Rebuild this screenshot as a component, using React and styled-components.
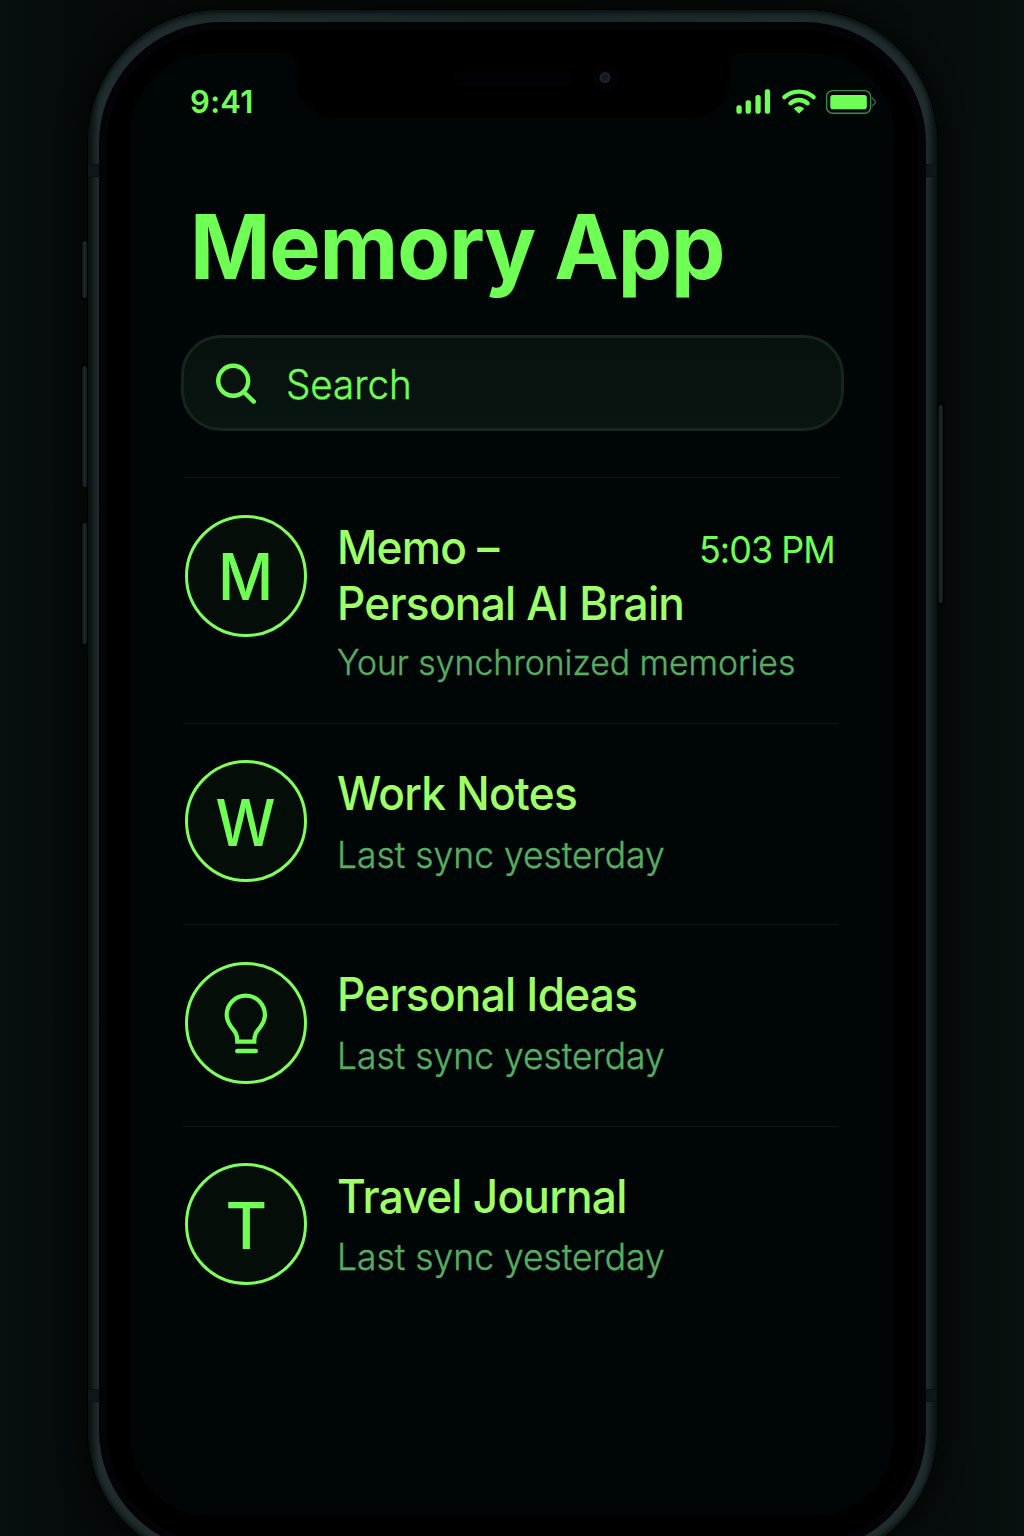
import React from "react";
import styled, { createGlobalStyle } from "styled-components";

const GlobalStyle = createGlobalStyle`
  * { box-sizing: border-box; }
  html, body { margin: 0; padding: 0; background: #060d0c; }
  body { width: 1024px; height: 1536px; overflow: hidden; font-family: Inter, "Liberation Sans", sans-serif; }
`;

const green = "#70ff55";

const Stage = styled.main`
  position: relative;
  width: 1024px;
  height: 1536px;
  overflow: hidden;
  padding: 10px 0 0 88px;
  background: linear-gradient(90deg, #07100e 0%, #050b0a 7%, #040908 50%, #060d0c 94%, #08110f 100%);
`;

const SideButton = styled.div`
  position: absolute;
  left: ${(p) => p.$x}px;
  top: ${(p) => p.$y}px;
  width: 5px;
  height: ${(p) => p.$h}px;
  border-radius: 3px;
  background: linear-gradient(90deg, #11181b, #2f3a3f 55%, #1a2226);
  box-shadow: 0 0 2px 1px #010303;
`;

const Frame = styled.div`
  position: relative;
  width: 849px;
  height: 1553px;
  padding: 12px 11px 11px;
  border-radius: 132px;
  background: linear-gradient(90deg, #0c1414 0, #1c2728 9px, #202c2d 11px, #1c2728 50%, #202c2d 838px, #1a2425 842px, #0d1515 849px);
  box-shadow: 0 0 0 1px #000202, 0 0 24px 4px rgba(0, 3, 3, 0.6), inset 0 3px 5px #0a1112, inset 0 -3px 5px #0a1112;
`;

const Antenna = styled.div`
  position: absolute;
  top: ${(p) => p.$y}px;
  ${(p) => (p.$right ? "right: 0;" : "left: 0;")}
  width: 11px;
  height: 13px;
  background: #0e1718;
  border-top: 1px solid #0a1112;
  border-bottom: 1px solid #0a1112;
`;

const Bezel = styled.div`
  height: 1530px;
  padding: 23px 24px 28px 23px;
  border-radius: 122px;
  background: #000;
  border: 8px solid #040307;
`;

const Screen = styled.div`
  position: relative;
  height: 1463px;
  border-radius: 80px;
  background: #000505;
  overflow: hidden;
`;

const Notch = styled.svg`
  position: absolute;
  left: 155px;
  top: 0;
`;

const StatusBar = styled.header`
  display: flex;
  justify-content: space-between;
  align-items: center;
  height: 98px;
  padding: 0 17px 0 60px;
`;

const Clock = styled.time`
  font-size: 31px;
  font-weight: 600;
  line-height: 38px;
  letter-spacing: 0.3px;
  color: ${green};
`;

const StatusIcons = styled.div`
  display: flex;
  align-items: center;
  height: 30px;

  svg:nth-child(2) { margin: 0 8px 0 10px; }
`;

const Content = styled.section`
  padding: 0 50px 0 51px;
  display: flex;
  flex-direction: column;
`;

const Title = styled.h1`
  margin: 41px 0 0 9px;
  font-size: 90px;
  line-height: 110px;
  font-weight: 670;
  letter-spacing: -1.2px;
  white-space: nowrap;
  color: ${green};
  transform: scaleX(0.959);
  transform-origin: left;
`;

const SearchBox = styled.label`
  display: flex;
  align-items: center;
  gap: 29px;
  margin-top: 33px;
  height: 96px;
  padding: 0 0 0 31px;
  border-radius: 40px;
  border: 3px solid #15261f;
  background: linear-gradient(180deg, #07110e, #091511);
  color: ${green};
`;

const Placeholder = styled.span`
  padding-top: 3px;
  font-size: 40.5px;
  font-weight: 330;
  -webkit-text-stroke: 0.4px ${green};
  transform: scaleX(0.952);
  transform-origin: left;
`;

const List = styled.ul`
  list-style: none;
  margin: 46px 0 0;
  padding: 0 5px 0 2px;
`;

const Item = styled.li`
  display: grid;
  grid-template-columns: 122px 1fr;
  column-gap: 30px;
  align-items: start;
  height: ${(p) => p.$h}px;
  padding: ${(p) => p.$pt}px 4px 0 2px;
  border-top: 1px solid #0c1615;
`;

const Avatar = styled.div`
  display: flex;
  align-items: center;
  justify-content: center;
  width: 122px;
  height: 122px;
  border-radius: 50%;
  border: 3px solid #80ff5c;
  background: #050d08;
  color: ${green};
  font-size: 65px;
  font-weight: 550;
  line-height: 1;
`;

const Glyph = styled.span`
  padding-top: ${(p) => p.$drop}px;
  transform: scaleX(${(p) => p.$sx});
`;

const Copy = styled.div`
  padding-top: ${(p) => p.$pt}px;
  white-space: nowrap;
  min-width: 0;
`;

const Heading = styled.div`
  display: flex;
  justify-content: space-between;
  align-items: flex-start;
`;

const Name = styled.h2`
  margin: 0;
  width: 350px;
  font-size: 46px;
  line-height: 56px;
  font-weight: 550;
  letter-spacing: -0.8px;
  color: #9fff66;
  transform: scaleX(0.961);
  transform-origin: left;
`;

const NameLine = styled.span`
  display: block;
`;

const Sub = styled.p`
  margin: ${(p) => p.$mt}px 0 0;
  font-size: ${(p) => p.$fs}px;
  line-height: 44px;
  font-weight: 330;
  color: #58ad61;
  -webkit-text-stroke: 0.4px #58ad61;
  transform: scaleX(${(p) => p.$sx});
  transform-origin: left;
`;

const Time = styled.time`
  padding-top: 8px;
  font-size: 37px;
  line-height: 46px;
  font-weight: 400;
  letter-spacing: -1px;
  color: ${green};
  transform: scaleX(0.972);
  transform-origin: right;
`;

const SignalIcon = () => (
  <svg width="36" height="28" viewBox="0 0 36 28" fill={green}>
    <rect x="1.4" y="17.3" width="5.3" height="8.5" rx="2.2" />
    <rect x="10.6" y="12.2" width="5.3" height="13.6" rx="2.2" />
    <rect x="20.4" y="7" width="5.3" height="18.8" rx="2.2" />
    <rect x="29.8" y="1.3" width="5.3" height="24.5" rx="2.2" />
  </svg>
);

const WifiIcon = () => (
  <svg width="36" height="26" viewBox="0 0 36 26" fill="none" stroke={green} strokeLinecap="round">
    <path d="M3.4 8.2 C11.5 0.8 24.5 0.8 32.6 8.2" strokeWidth="4.3" />
    <path d="M9.4 14.3 C14.2 9.9 21.8 9.9 26.6 14.3" strokeWidth="4.3" />
    <path d="M18 23.4 L14 19.6 C16.2 17.7 19.8 17.7 22 19.6 Z" fill={green} strokeWidth="1.8" strokeLinejoin="round" />
  </svg>
);

const BatteryIcon = () => (
  <svg width="52" height="26" viewBox="0 0 52 26" fill="none">
    <rect x="1.6" y="1.6" width="44" height="22.6" rx="6" stroke="#3a8a4c" strokeWidth="1.4" />
    <rect x="5.3" y="6" width="36.5" height="14.2" rx="2.5" fill={green} />
    <path d="M47 8.8 L50.2 12 Q50.8 13 50.2 14 L47 17.2" stroke="#2f6b3d" strokeWidth="1.3" />
  </svg>
);

const SearchIcon = () => (
  <svg width="42" height="43" viewBox="0 0 42 43" fill="none" stroke={green} strokeWidth="4.4" strokeLinecap="round">
    <circle cx="18.2" cy="18.8" r="15" />
    <path d="M28.8 30 L38.8 39.6" />
  </svg>
);

const BulbIcon = () => (
  <svg width="48" height="66" viewBox="0 0 48 66" fill="none" stroke={green} strokeWidth="4.2">
    <path d="M15.3 51.7 H32.3 C32.3 43 35.3 41 38.3 37 C41.3 33 42.9 29.5 42.9 25 C42.9 14 34.3 5.6 23.8 5.6 C13.3 5.6 4.7 14 4.7 25 C4.7 29.5 6.3 33 9.3 37 C12.3 41 15.3 43 15.3 51.7 Z" />
    <path d="M15.3 61 H33.7" strokeLinecap="round" strokeWidth="4.6" />
  </svg>
);

const rows = [
  { icon: "M", sx: 0.93, drop: 0, name: ["Memo –", "Personal AI Brain"], sub: "Your synchronized memories", fs: 35, ssx: 0.964, mt: 9, time: "5:03 PM", h: 246, pt: 37, cpt: 4 },
  { icon: "W", sx: 0.92, drop: 2, name: ["Work Notes"], sub: "Last sync yesterday", fs: 36.5, ssx: 0.971, mt: 12, h: 201, pt: 36, cpt: 5 },
  { icon: "bulb", name: ["Personal Ideas"], sub: "Last sync yesterday", fs: 36.5, ssx: 0.971, mt: 12, h: 202, pt: 37, cpt: 4 },
  { icon: "T", sx: 0.98, drop: 2, name: ["Travel Journal"], sub: "Last sync yesterday", fs: 36.5, ssx: 0.971, mt: 11, h: 202, pt: 36, cpt: 5 },
];

export default function App() {
  return (
    <Stage>
      <GlobalStyle />
      <SideButton $x={82} $y={241} $h={57} />
      <SideButton $x={82} $y={366} $h={121} />
      <SideButton $x={82} $y={523} $h={121} />
      <SideButton $x={938} $y={405} $h={198} />
      <Frame>
        <Antenna $y={154} />
        <Antenna $y={154} $right />
        <Antenna $y={1379} />
        <Antenna $y={1379} $right />
        <Bezel>
          <Screen>
            <Notch width="455" height="66" viewBox="0 0 455 66">
              <path d="M0 0 H455 Q446 1 446 11 V22 C446 46 430 65 405 65 H50 C26 65 10 46 10 22 V11 Q10 1 0 0 Z" fill="#000" />
              <rect x="169" y="18" width="119" height="15" rx="7.5" fill="#020204" />
              <circle cx="320" cy="24.5" r="13" fill="#030305" />
              <circle cx="320" cy="24.5" r="5.5" fill="#1b222c" />
              <circle cx="320" cy="24.5" r="3" fill="#14181f" />
            </Notch>
            <StatusBar>
              <Clock>9:41</Clock>
              <StatusIcons>
                <SignalIcon />
                <WifiIcon />
                <BatteryIcon />
              </StatusIcons>
            </StatusBar>
            <Content>
              <Title>Memory App</Title>
              <SearchBox>
                <SearchIcon />
                <Placeholder>Search</Placeholder>
              </SearchBox>
              <List>
                {rows.map((r) => (
                  <Item key={r.icon} $h={r.h} $pt={r.pt}>
                    <Avatar>{r.icon === "bulb" ? <BulbIcon /> : <Glyph $sx={r.sx} $drop={r.drop}>{r.icon}</Glyph>}</Avatar>
                    <Copy $pt={r.cpt}>
                      <Heading>
                        <Name>
                          {r.name.map((line) => (
                            <NameLine key={line}>{line}</NameLine>
                          ))}
                        </Name>
                        {r.time && <Time>{r.time}</Time>}
                      </Heading>
                      <Sub $fs={r.fs} $sx={r.ssx} $mt={r.mt}>{r.sub}</Sub>
                    </Copy>
                  </Item>
                ))}
              </List>
            </Content>
          </Screen>
        </Bezel>
      </Frame>
    </Stage>
  );
}
